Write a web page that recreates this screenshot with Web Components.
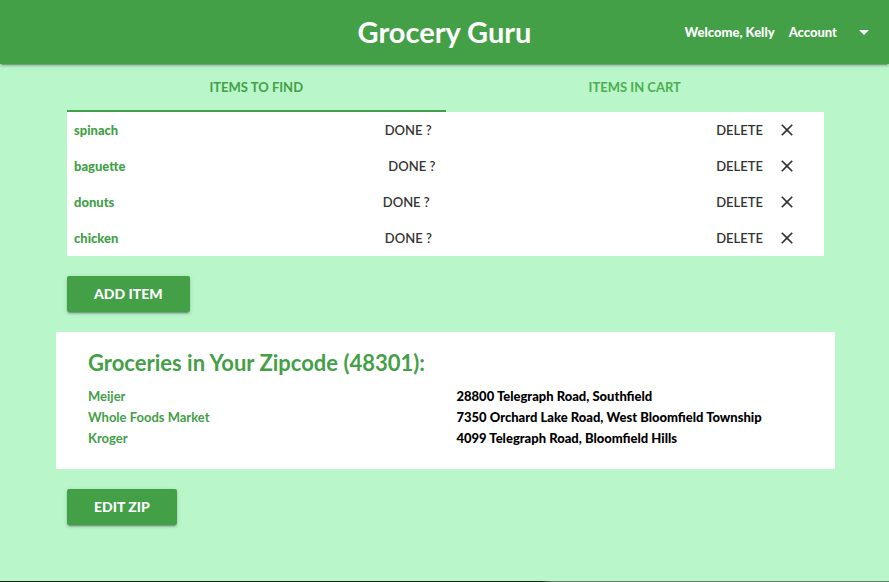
<!DOCTYPE html>
<html lang="en">
<head>
<meta charset="utf-8">
<meta name="viewport" content="width=device-width, initial-scale=1">
<title>Grocery Guru</title>
<style>
  :root {
    --green: #43a047;
    --green-light: #4caf50;
    --mint: #b9f6ca;
    --ink: #343434;
    --shadow: 0 2px 2px 0 rgba(0,0,0,.14), 0 1px 5px 0 rgba(0,0,0,.12), 0 3px 1px -2px rgba(0,0,0,.2);
  }
  body { margin: 0; background: var(--mint); font-family: Lato, "Open Sans", sans-serif; font-size: 14px; line-height: 21px; }
</style>
</head>
<body>
<grocery-app></grocery-app>
<script>
const define = (name, html, setup) => {
  const template = document.createElement('template');
  template.innerHTML = html;
  customElements.define(name, class extends HTMLElement {
    constructor() {
      super();
      this.attachShadow({ mode: 'open' }).append(template.content.cloneNode(true));
    }
    connectedCallback() { if (setup) setup(this, this.shadowRoot); }
  });
};

define('app-bar', `
  <style>
    :host { display: block; position: relative; background: var(--green); color: #fff; box-shadow: var(--shadow); }
    header { display: grid; grid-template-columns: 1fr auto 1fr; align-items: center; min-height: 64px; }
    h1 { grid-column: 2; margin: 0; font-size: 29px; line-height: 32px; font-weight: 700; }
    nav { display: flex; justify-content: flex-end; align-items: center; gap: 14px; padding-right: 13px; font-weight: 900; font-size: 13px; white-space: nowrap; }
    button { display: flex; align-items: center; gap: 15px; padding: 0; border: 0; background: none; color: inherit; font: inherit; cursor: pointer; }
    svg { width: 24px; height: 24px; fill: currentColor; }
  </style>
  <header>
    <h1><slot></slot></h1>
    <nav>
      <span><slot name="greeting"></slot></span>
      <button type="button" aria-haspopup="menu">Account
        <svg viewBox="0 0 24 24" aria-hidden="true"><path d="M7 10l5 5 5-5z"/></svg>
      </button>
    </nav>
  </header>`);

define('tab-bar', `
  <style>
    :host { display: grid; grid-template-columns: 1fr 1fr; }
  </style>
  <slot></slot>`, el => el.setAttribute('role', 'tablist'));

define('tab-button', `
  <style>
    :host { display: block; }
    button { box-sizing: border-box; width: 100%; height: 48px; padding: 0; border: 0; border-bottom: 2px solid transparent;
      background: none; color: var(--green-light); font: inherit; font-weight: 700; font-size: 13px; text-transform: uppercase; cursor: pointer; }
    :host([selected]) button { color: var(--green); border-color: var(--green); }
  </style>
  <button type="button" role="tab"><slot></slot></button>`,
  (el, root) => root.querySelector('button').setAttribute('aria-selected', el.hasAttribute('selected')));

define('grocery-item', `
  <style>
    :host { display: flex; justify-content: space-between; align-items: center; min-height: 36px; padding-left: 7px; background: #fff; }
    .name { color: var(--green); font-size: 13px; font-weight: 900; }
    button { display: flex; align-items: center; gap: 14px; height: 36px; padding: 0; border: 0; background: none;
      color: var(--ink); font: inherit; font-size: 13px; font-weight: 600; cursor: pointer; }
    .delete { padding: 0 27px 0 18px; }
    svg { width: 20px; height: 20px; fill: currentColor; }
  </style>
  <span class="name"><slot></slot></span>
  <button type="button">DONE ?</button>
  <button type="button" class="delete">DELETE
    <svg viewBox="0 0 24 24" aria-hidden="true"><path d="M19 6.41L17.59 5 12 10.59 6.41 5 5 6.41 10.59 12 5 17.59 6.41 19 12 13.41 17.59 19 19 17.59 13.41 12z"/></svg>
  </button>`);

define('raised-button', `
  <style>
    :host { display: inline-block; }
    button { display: block; height: 36px; padding: 0 27px 2px; border: 0; border-radius: 2px; background: var(--green); color: #fff;
      box-shadow: var(--shadow); font: inherit; font-size: 14px; font-weight: 900; text-transform: uppercase; cursor: pointer; }
  </style>
  <button type="button"><slot></slot></button>`);

define('store-panel', `
  <style>
    :host { display: block; background: #fff; padding: 15px 32px 20px; }
    h2 { margin: 0 0 8px; color: var(--green); font-size: 22px; line-height: 31px; font-weight: 700; }
  </style>
  <h2><slot name="heading"></slot></h2>
  <slot></slot>`);

define('store-row', `
  <style>
    :host { display: grid; grid-template-columns: 1fr 1fr; column-gap: 22px; font-size: 13px; }
    .name { color: var(--green); font-weight: 700; }
    .address { color: #000; font-weight: 900; }
  </style>
  <span class="name"><slot></slot></span>
  <span class="address"><slot name="address"></slot></span>`);

define('grocery-app', `
  <style>
    :host { display: flex; flex-direction: column; min-height: 100vh; }
    main { flex: 1; margin: 0 65px 0 67px; }
    raised-button { margin: 20px 0; vertical-align: top; }
    store-panel { margin: 0 -11px; }
    footer { height: 1px; background: linear-gradient(90deg, #1d2420 0 61%, #66786c 62% 100%); }
  </style>
  <app-bar>Grocery Guru<span slot="greeting">Welcome, Kelly</span></app-bar>
  <main>
    <tab-bar>
      <tab-button selected>Items to find</tab-button>
      <tab-button>Items in cart</tab-button>
    </tab-bar>
    <section>
      <grocery-item>spinach</grocery-item>
      <grocery-item>baguette</grocery-item>
      <grocery-item>donuts</grocery-item>
      <grocery-item>chicken</grocery-item>
    </section>
    <raised-button>Add item</raised-button>
    <store-panel>
      <span slot="heading">Groceries in Your Zipcode (48301):</span>
      <store-row>Meijer<span slot="address">28800 Telegraph Road, Southfield</span></store-row>
      <store-row>Whole Foods Market<span slot="address">7350 Orchard Lake Road, West Bloomfield Township</span></store-row>
      <store-row>Kroger<span slot="address">4099 Telegraph Road, Bloomfield Hills</span></store-row>
    </store-panel>
    <raised-button>Edit zip</raised-button>
  </main>
  <footer></footer>`);
</script>
</body>
</html>
